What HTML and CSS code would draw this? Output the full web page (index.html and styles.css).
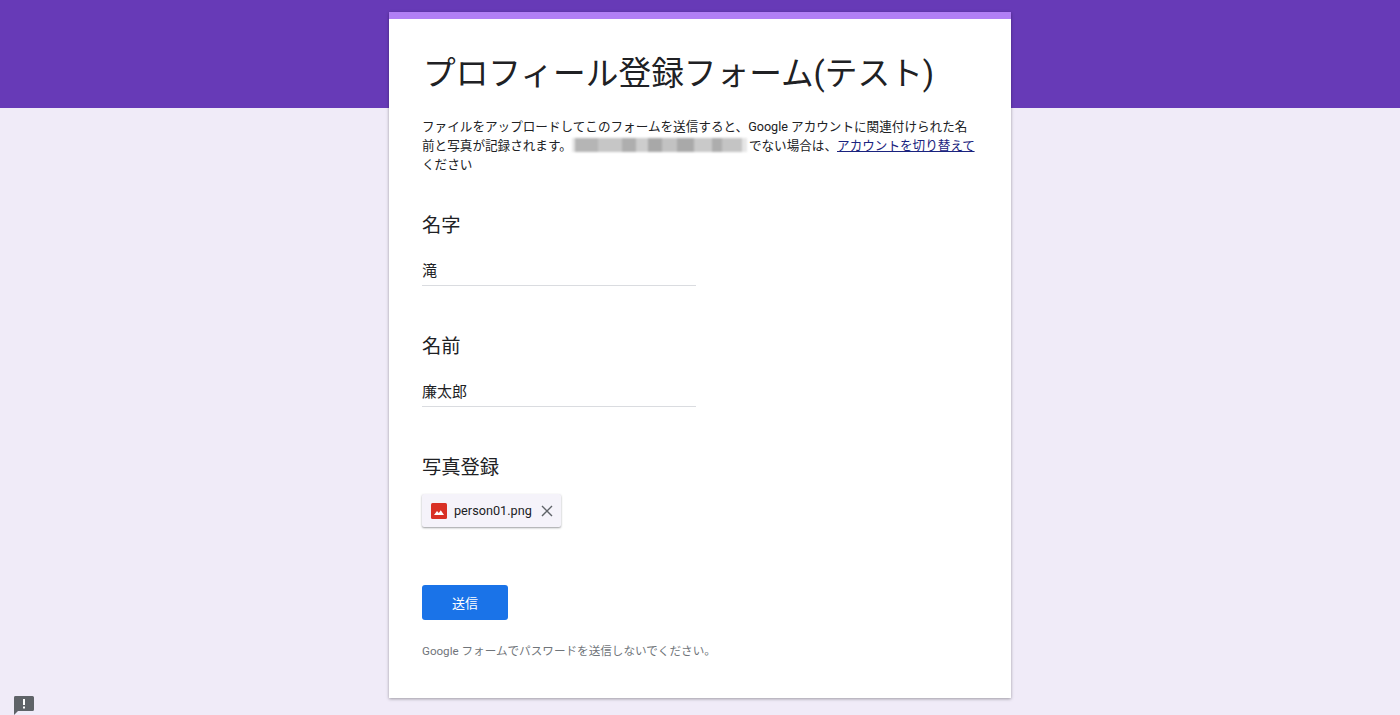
FILE: index.html
```html
<!DOCTYPE html>
<html lang="ja">
<head>
  <meta charset="UTF-8" />
  <meta name="viewport" content="width=device-width, initial-scale=1.0" />
  <title>プロフィール登録フォーム(テスト)</title>
  <link rel="stylesheet" href="styles.css">
</head>
<body>
  <div class="banner"></div>
  <div class="container">
    <h1>プロフィール登録フォーム(テスト)</h1>
    <p class="intro">ファイルをアップロードしてこのフォームを送信すると、Google アカウントに関連付けられた名前と写真が記録されます。<span class="blur"></span>でない場合は、<a href="#">アカウントを切り替えて</a>ください</p>

    <form>
      <div class="field">
        <label for="last-name">名字</label>
        <input type="text" id="last-name" value="滝" />
      </div>
      <div class="field">
        <label for="first-name">名前</label>
        <input type="text" id="first-name" value="廉太郎" />
      </div>
      <div class="field">
        <label>写真登録</label>
        <div class="file-chip">
          <svg class="file-icon" width="16" height="16" viewBox="0 0 16 16">
            <rect width="16" height="16" rx="1.5" fill="#d93025" />
            <path d="M3 12 L6 8 L7.8 10 L9.8 7.2 L13 12 Z" fill="#fff" />
          </svg>
          <span class="file-name">person01.png</span>
          <svg class="file-remove" width="12" height="12" viewBox="0 0 12 12">
            <path d="M1 1 L11 11 M11 1 L1 11" stroke="#5f6368" stroke-width="1.4" fill="none" />
          </svg>
        </div>
      </div>
      <button type="button">送信</button>
    </form>

    <p class="note">Google フォームでパスワードを送信しないでください。</p>
  </div>

  <div class="report">
    <svg width="20" height="19" viewBox="0 0 20 19">
      <path d="M1.5 0 H18.5 A1.5 1.5 0 0 1 20 1.5 V13.5 A1.5 1.5 0 0 1 18.5 15 H4 L0 19 V1.5 A1.5 1.5 0 0 1 1.5 0 Z" fill="#5f6368" />
      <rect x="9" y="3" width="2" height="6" fill="#fff" />
      <rect x="9" y="10.5" width="2" height="2" fill="#fff" />
    </svg>
  </div>
</body>
</html>
```

FILE: styles.css
```css
* {
  box-sizing: border-box;
}
body {
  font-family: Roboto, 'Noto Sans CJK JP', sans-serif;
  background: #f0ebf8;
  margin: 0;
  color: #202124;
  height: 715px;
  overflow: hidden;
}
.banner {
  height: 108px;
  background: #673ab7;
}
.container {
  width: 622px;
  height: 686px;
  margin: -96px auto 0;
  background: white;
  border-top: 7px solid #b17ff5;
  padding: 0 33px;
  box-shadow: 0 1px 3px rgba(0,0,0,0.35);
}
h1 {
  font-size: 32.7px;
  font-weight: 400;
  line-height: 46px;
  margin: 0;
  padding: 23px 0 0 1px;
  color: #202124;
  white-space: nowrap;
  margin-top: 9px;
}
.intro {
  font-size: 12.6px;
  line-height: 19px;
  margin: 20px 0 0;
  color: #202124;
}
.intro a {
  color: #1a237e;
}
.blur {
  display: inline-block;
  width: 175px;
  height: 14px;
  margin: 0 2px 0 0;
  vertical-align: -2px;
  filter: blur(1px);
  background: linear-gradient(90deg, #e6e6e6 0 3px, #b5b5b5 3px 26px, #c6c6c6 26px 50px, #aeaeae 50px 64px, #cdcdcd 64px 76px, #a8a8a8 76px 90px, #c2c2c2 90px 105px, #a9a9a9 105px 122px, #c9c9c9 122px 140px, #adadad 140px 150px, #c4c4c4 150px 170px, #e6e6e6 170px);
}
.field {
  margin-bottom: 49px;
}
form {
  margin-top: 40px;
}
label {
  display: block;
  font-size: 19.3px;
  line-height: 24px;
}
input {
  display: block;
  width: 274px;
  height: 32px;
  margin-top: 16px;
  padding: 0;
  border: none;
  border-bottom: 1px solid #dadce0;
  font: inherit;
  font-size: 15px;
  color: #202124;
  outline: none;
}
.file-chip {
  display: flex;
  align-items: center;
  width: 139px;
  height: 33px;
  margin-top: 14px;
  padding: 0 9px;
  background: #f5f3fa;
  border-radius: 2px;
  box-shadow: 0 1px 2px rgba(60,64,67,0.5);
}
.file-icon {
  flex: none;
}
.file-name {
  margin-left: 7px;
  font-size: 12.7px;
  white-space: nowrap;
}
.file-remove {
  flex: none;
  margin-left: 9px;
}
button {
  display: block;
  width: 86px;
  height: 35px;
  margin-top: 58px;
  background: #1a73e8;
  color: #fff;
  font: inherit;
  font-size: 13px;
  border: none;
  border-radius: 3px;
  cursor: pointer;
}
.note {
  font-size: 11.6px;
  line-height: 16px;
  margin: 23px 0 0;
  color: #70757a;
}
.report {
  position: fixed;
  left: 14px;
  top: 696px;
  line-height: 0;
}
```
